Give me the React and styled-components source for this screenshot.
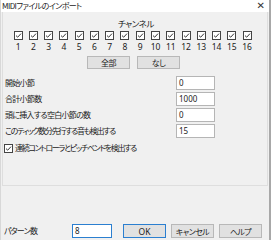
import React from "react";
import styled, { createGlobalStyle } from "styled-components";

const Global = createGlobalStyle`
  html, body { margin: 0; padding: 0; background: #f0f0f0; }
  body { font-family: "Noto Sans CJK JP", "Noto Sans", sans-serif; }
`;

const Window = styled.div`
  width: 271px;
  height: 240px;
  box-sizing: border-box;
  background: #f0f0f0;
  border-left: 1px solid #d8d8d8;
  border-right: 2px solid #a8a8a8;
  display: flex;
  flex-direction: column;
  overflow: hidden;
  color: #1a1a1a;
  font-size: 8px;
  font-feature-settings: "palt";
`;

const TitleBar = styled.div`
  height: 12px;
  background: #fff;
  display: flex;
  align-items: center;
  justify-content: space-between;
  padding: 0 4px 0 1px;
  flex-shrink: 0;
`;

const Title = styled.span`
  font-size: 8px;
  line-height: 12px;
  letter-spacing: -0.6px;
`;

const Close = styled.span`
  font-family: "DejaVu Sans", sans-serif;
  font-size: 10px;
  line-height: 12px;
  color: #333;
`;

const Group = styled.div`
  margin: 0 1px 0 1px;
  height: 174px;
  box-sizing: border-box;
  border: 1px solid #dedede;
  border-top: none;
  display: flex;
  flex-direction: column;
  flex-shrink: 0;
`;

const ChannelTitle = styled.div`
  text-align: center;
  font-size: 8.5px;
  line-height: 10px;
  margin-top: 6px;
  padding-left: 2px;
  letter-spacing: -0.4px;
`;

const ChannelGrid = styled.div`
  display: grid;
  grid-template-columns: repeat(16, 15.27px);
  margin: 3px 0 0 7.5px;
`;

const ChannelCell = styled.div`
  display: flex;
  flex-direction: column;
  align-items: center;
`;

const Num = styled.span`
  font-family: "Noto Sans", sans-serif;
  font-size: 8.5px;
  line-height: 10px;
  margin-top: 2px;
  color: #222;
`;

const Box = styled.svg`
  display: block;
  width: 9px;
  height: 9px;
  flex-shrink: 0;
`;

const Check = () => (
  <Box viewBox="0 0 9 9">
    <rect x="0.5" y="0.5" width="8" height="8" fill="#fff" stroke="#444" />
    <path d="M2 4.6 L3.7 6.2 L7 2.6" fill="none" stroke="#333" strokeWidth="1" />
  </Box>
);

const ButtonRow = styled.div`
  display: flex;
  gap: 7px;
  margin: 4px 0 0 84px;
`;

const Btn = styled.div`
  width: 43px;
  height: ${(p) => (p.$tall ? 14 : 13)}px;
  box-sizing: border-box;
  background: #e1e1e1;
  border: 1px solid ${(p) => (p.$primary ? "#2b7fd0" : "#b8b8b8")};
  display: flex;
  align-items: center;
  justify-content: center;
  font-size: ${(p) => (p.$latin ? "8.5px" : "8px")};
  font-family: ${(p) =>
    p.$latin ? '"Noto Sans", sans-serif' : '"Noto Sans CJK JP", sans-serif'};
  letter-spacing: ${(p) => (p.$latin ? "0" : "-0.6px")};
  color: #222;
`;

const Fields = styled.div`
  display: grid;
  grid-template-columns: 171px 40px;
  row-gap: 2px;
  margin: 7px 0 0 2px;
  align-items: center;
`;

const Label = styled.span`
  font-size: 8px;
  line-height: 14px;
  white-space: nowrap;
  letter-spacing: ${(p) => (p.$tight ? "-1.3px" : "-0.7px")};
`;

const Input = styled.div`
  width: ${(p) => p.$w || 40}px;
  height: 14px;
  box-sizing: border-box;
  background: #fff;
  border: 1px solid ${(p) => (p.$focus ? "#2b7fd0" : "#b5b5b5")};
  font-family: "Noto Sans", sans-serif;
  font-size: 8px;
  line-height: 12px;
  padding-left: 2px;
  color: #222;
`;

const CheckRow = styled.div`
  display: flex;
  align-items: center;
  gap: 2px;
  margin: 3px 0 0 1px;
`;

const Footer = styled.div`
  display: flex;
  align-items: center;
  margin-top: 38px;
  padding-left: 3px;
`;

const FooterLabel = styled.span`
  width: 68px;
  font-size: 8px;
  line-height: 14px;
  letter-spacing: -0.8px;
`;

const FooterButtons = styled.div`
  display: flex;
  gap: 5px;
  margin-left: 11px;
`;

const channels = Array.from({ length: 16 }, (_, i) => i + 1);

const fields = [
  ["開始小節", "0", false],
  ["合計小節数", "1000", false],
  ["頭に挿入する空白小節の数", "0", false],
  ["このティック数分先行する音も検出する", "15", true],
];

export default function App() {
  return (
    <>
      <Global />
      <Window>
        <TitleBar>
          <Title>MIDIファイルのインポート</Title>
          <Close>✕</Close>
        </TitleBar>
        <Group>
          <ChannelTitle>チャンネル</ChannelTitle>
          <ChannelGrid>
            {channels.map((n) => (
              <ChannelCell key={n}>
                <Check />
                <Num>{n}</Num>
              </ChannelCell>
            ))}
          </ChannelGrid>
          <ButtonRow>
            <Btn>全部</Btn>
            <Btn>なし</Btn>
          </ButtonRow>
          <Fields>
            {fields.map(([l, v, t]) => (
              <React.Fragment key={l}>
                <Label $tight={t}>{l}</Label>
                <Input $w={39}>{v}</Input>
              </React.Fragment>
            ))}
          </Fields>
          <CheckRow>
            <Check />
            <Label $tight>連続コントローラとピッチベンドを検出する</Label>
          </CheckRow>
        </Group>
        <Footer>
          <FooterLabel>パターン数</FooterLabel>
          <Input $focus $w={40}>8</Input>
          <FooterButtons>
            <Btn $primary $latin $tall>OK</Btn>
            <Btn $tall>キャンセル</Btn>
            <Btn $tall>ヘルプ</Btn>
          </FooterButtons>
        </Footer>
      </Window>
    </>
  );
}
